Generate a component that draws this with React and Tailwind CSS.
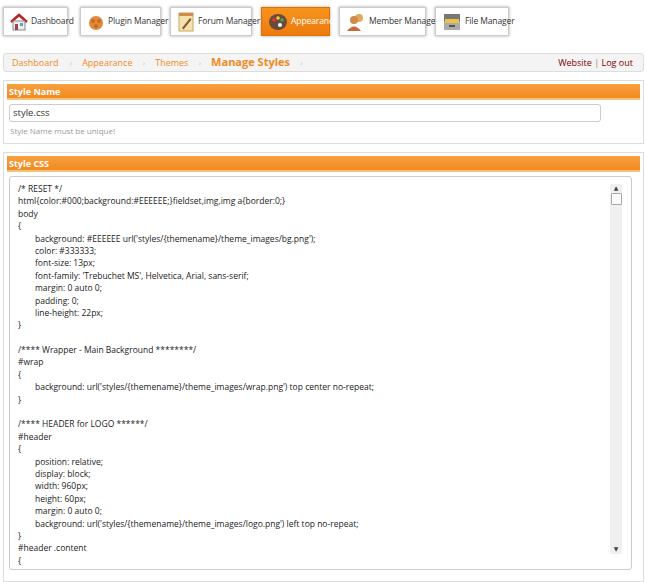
const F = { fontFamily: '"Open Sans","DejaVu Sans",sans-serif' };

function Icon({ k }) {
  if (k === 'home') return (<svg className="shrink-0" width="20" height="20" viewBox="0 0 20 20"><path d="M2 10 L10 3 L18 10" fill="none" stroke="#b22" strokeWidth="2.5"/><rect x="4" y="9" width="12" height="9" fill="#eee" stroke="#888"/><rect x="6" y="12" width="3" height="6" fill="#945"/><rect x="11" y="11" width="3" height="3" fill="#69c"/></svg>);
  if (k === 'plugin') return (<svg className="shrink-0" width="20" height="20" viewBox="0 0 20 20"><circle cx="10" cy="11" r="7" fill="#e08a3c"/><circle cx="7" cy="9" r="2" fill="#c76a20"/><circle cx="13" cy="9" r="2" fill="#c76a20"/><circle cx="10" cy="14" r="2" fill="#c76a20"/></svg>);
  if (k === 'forum') return (<svg className="shrink-0" width="20" height="22" viewBox="0 0 20 22"><rect x="3" y="2" width="14" height="18" fill="#f3e3b0" stroke="#c9a75a"/><rect x="3" y="2" width="14" height="3" fill="#d08a4a"/><path d="M6 17 L14 7 L15.5 8.5 L7.5 18.5 Z" fill="#8a5a2a"/></svg>);
  if (k === 'paint') return (<svg className="shrink-0" width="22" height="20" viewBox="0 0 22 20"><ellipse cx="11" cy="10" rx="9" ry="8" fill="#6a4a3a"/><circle cx="7" cy="8" r="1.8" fill="#e33"/><circle cx="11" cy="6" r="1.8" fill="#fc3"/><circle cx="15" cy="8" r="1.8" fill="#3a6"/><circle cx="13" cy="13" r="2" fill="#fff"/></svg>);
  if (k === 'member') return (<svg className="shrink-0" width="22" height="20" viewBox="0 0 22 20"><circle cx="14" cy="6" r="4" fill="#e3a860"/><circle cx="9" cy="8" r="4" fill="#d08a4a"/><path d="M2 19 Q9 10 16 19 Z" fill="#c86a3a"/></svg>);
  return (<svg className="shrink-0" width="22" height="20" viewBox="0 0 22 20"><rect x="3" y="2" width="16" height="7" fill="#777"/><rect x="3" y="9" width="16" height="9" fill="#aaa"/><rect x="4" y="7" width="14" height="4" fill="#f0c040"/><rect x="8" y="13" width="6" height="2" fill="#555"/></svg>);
}

const tabs = [
  ['home', 'Dashboard', 65], ['plugin', 'Plugin Manager', 81], ['forum', 'Forum Manager', 82],
  ['paint', 'Appearance', 69, true], ['member', 'Member Manager', 87], ['file', 'File Manager', 74],
];

const code = [
  [0, '/* RESET */'],
  [0, 'html{color:#000;background:#EEEEEE;}fieldset,img,img a{border:0;}'],
  [0, 'body'], [0, '{'],
  [1, "background: #EEEEEE url('styles/{themename}/theme_images/bg.png');"],
  [1, 'color: #333333;'], [1, 'font-size: 13px;'],
  [1, "font-family: 'Trebuchet MS', Helvetica, Arial, sans-serif;"],
  [1, 'margin: 0 auto 0;'], [1, 'padding: 0;'], [1, 'line-height: 22px;'],
  [0, '}'], [0, ''],
  [0, '/**** Wrapper - Main Background ********/'], [0, '#wrap'], [0, '{'],
  [1, "background: url('styles/{themename}/theme_images/wrap.png') top center no-repeat;"],
  [0, '}'], [0, ''],
  [0, '/**** HEADER for LOGO ******/'], [0, '#header'], [0, '{'],
  [1, 'position: relative;'], [1, 'display: block;'], [1, 'width: 960px;'], [1, 'height: 60px;'],
  [1, 'margin: 0 auto 0;'],
  [1, "background: url('styles/{themename}/theme_images/logo.png') left top no-repeat;"],
  [0, '}'], [0, '#header .content'], [0, '{'],
];

export default function App() {
  return (
    <div className="w-[647px] h-[582px] bg-white overflow-hidden text-[#333]" style={F}>
      <div className="flex pl-[3px] pt-[7px] h-[52px]">
        {tabs.map(([k, t, w, a], i) => (
          <div key={i} style={{ width: w, marginRight: [12, 9, 9, 9, 9, 0][i] }}
            className={`h-[29px] shrink-0 flex items-center gap-[2px] pl-[5px] text-[8.5px] tracking-[-0.1px] shadow-[0_0_3px_rgba(0,0,0,0.35)] ${a ? 'bg-gradient-to-b from-[#f7941d] to-[#ec7a0c] text-white border border-[#e07000]' : 'bg-white border border-[#ccc]'}`}>
            <Icon k={k} /><span className="whitespace-nowrap">{t}</span>
          </div>
        ))}
      </div>
      <div className="mx-[3px] h-[19px] mt-[1px] bg-[#f4f4f4] border border-[#ddd] rounded-[3px] flex items-center text-[9px] text-[#f08a24]">
        <span className="pl-[8px] pr-[11px]">Dashboard</span><span className="text-[#ccc]">›</span>
        <span className="px-[10px]">Appearance</span><span className="text-[#ccc]">›</span>
        <span className="px-[10px]">Themes</span><span className="text-[#ccc]">›</span>
        <span className="px-[10px] text-[11px] font-bold">Manage Styles</span><span className="text-[#ccc]">›</span>
        <span className="ml-auto pr-[10px] text-[#800000]">Website <span className="text-[#888]">|</span> Log out</span>
      </div>
      <div className="mx-[3px] mt-[8px] border border-[#ddd] h-[64px] p-[3px]">
        <div className="h-[16px] bg-gradient-to-b from-[#f9a040] to-[#f08a1c] border-b-2 border-[#f6c17a] text-white text-[9px] font-bold pl-[2px] leading-[15px]">Style Name</div>
        <div className="mt-[4px] ml-[2px] w-[592px] h-[18px] border border-[#ccc] rounded-[3px] text-[9.5px] pl-[3px] leading-[16px]">style.css</div>
        <div className="text-[8px] text-[#999] mt-[3px] pl-[3px]">Style Name must be unique!</div>
      </div>
      <div className="mx-[3px] mt-[8px] border border-[#ddd] h-[430px] p-[3px]">
        <div className="h-[16px] bg-gradient-to-b from-[#f9a040] to-[#f08a1c] border-b-2 border-[#f6c17a] text-white text-[9px] font-bold pl-[2px] leading-[15px]">Style CSS</div>
        <div className="mt-[4px] ml-[2px] w-[623px] h-[394px] border border-[#ccc] rounded-[3px] flex">
          <div className="flex-1 pl-[8px] pt-[6px] text-[8.5px] leading-[12.4px] text-[#222] overflow-hidden">
            {code.map(([ind, s], i) => (
              <div key={i} className="h-[12.4px] whitespace-nowrap" style={{ paddingLeft: ind ? 17 : 0 }}>{s}</div>
            ))}
          </div>
          <div className="w-[12px] mr-[9px] mt-[7px] mb-[15px] bg-[#f0f0f0] flex flex-col items-center">
            <div className="text-[6px] text-[#444] h-[9px] leading-[9px]">▲</div>
            <div className="w-[11px] h-[12px] bg-[#fafafa] border border-[#aaa] rounded-[1px]"></div>
            <div className="flex-1"></div>
            <div className="text-[6px] text-[#444] h-[9px] leading-[9px]">▼</div>
          </div>
        </div>
      </div>
    </div>
  );
}
